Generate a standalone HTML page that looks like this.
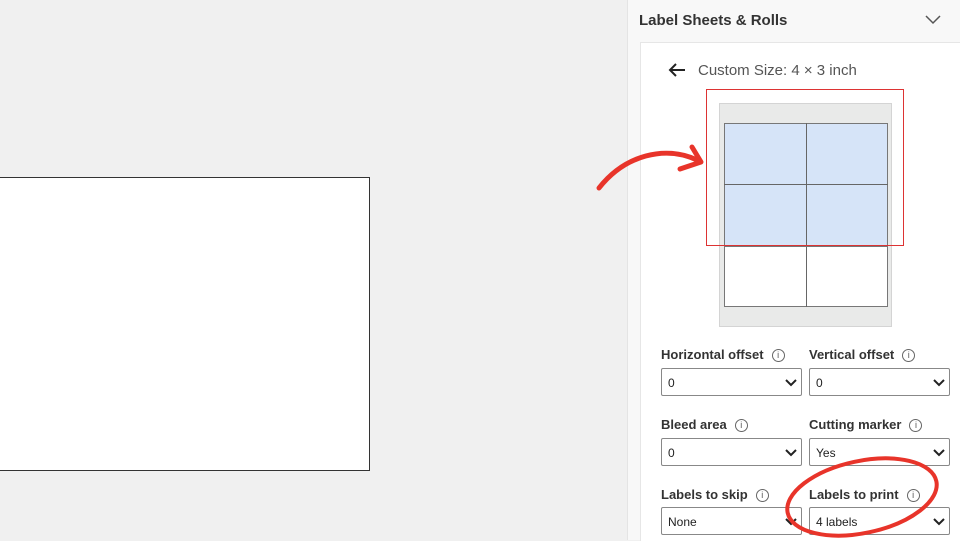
<!DOCTYPE html>
<html><head><style>
body{margin:0;width:960px;height:540px;overflow:hidden;background:#f0f0f0;font-family:"Liberation Sans",sans-serif;position:relative}
.a{position:absolute}
.lbl{position:absolute;font-weight:bold;font-size:13px;color:#333}
.lbl i{display:inline-block;width:11px;height:11px;border:1px solid #666;border-radius:50%;font-style:normal;font-weight:normal;font-size:9px;text-align:center;line-height:11px;margin-left:8px;vertical-align:1px;color:#555}
.sel{position:absolute;height:28px;border:1px solid #888;border-radius:2px;background:#fff;font-size:12px;color:#222;line-height:28px;padding-left:6px;box-sizing:border-box;width:141px}
.sel svg{position:absolute;right:4px;top:10px}
</style></head><body>
<div class="a" style="left:-1px;top:177px;width:369px;height:292px;background:#fff;border:1px solid #333"></div>
<div class="a" style="left:627px;top:0;width:333px;height:540px;background:#f8f8f8;border-left:1px solid #e4e4e4"></div>
<div class="a" style="left:639px;top:12px;font-size:15px;font-weight:bold;color:#333">Label Sheets &amp; Rolls</div>
<svg class="a" style="left:924px;top:14px" width="18" height="12"><path d="M2 2 L9 9 L16 2" fill="none" stroke="#555" stroke-width="1.5"/></svg>
<div class="a" style="left:640px;top:42px;width:320px;height:498px;background:#fff;border-top:1px solid #e6e6e6;border-left:1px solid #e6e6e6"></div>
<svg class="a" style="left:667px;top:62px" width="20" height="16"><path d="M18 8 H3 M9 2 L3 8 L9 14" fill="none" stroke="#222" stroke-width="2"/></svg>
<div class="a" style="left:698px;top:62px;font-size:15px;color:#555">Custom Size: 4 × 3 inch</div>
<div class="a" style="left:719px;top:103px;width:173px;height:224px;background:#e9eae9;border:1px solid #d4d4d4;box-sizing:border-box"></div>
<div class="a" style="left:724px;top:123px;width:164px;height:184px;background:#fff;border:1px solid #777;box-sizing:border-box"></div>
<div class="a" style="left:725px;top:124px;width:162px;height:122px;background:#d6e4f8"></div>
<div class="a" style="left:806px;top:123px;width:1px;height:184px;background:#666"></div>
<div class="a" style="left:724px;top:184px;width:164px;height:1px;background:#666"></div>
<div class="a" style="left:724px;top:246px;width:164px;height:1px;background:#777"></div>
<div class="a" style="left:706px;top:89px;width:198px;height:157px;border:1px solid #d33;box-sizing:border-box"></div>
<div class="lbl" style="left:661px;top:347px">Horizontal offset<i>i</i></div>
<div class="lbl" style="left:809px;top:347px">Vertical offset<i>i</i></div>
<div class="lbl" style="left:661px;top:417px">Bleed area<i>i</i></div>
<div class="lbl" style="left:809px;top:417px">Cutting marker<i>i</i></div>
<div class="lbl" style="left:661px;top:487px">Labels to skip<i>i</i></div>
<div class="lbl" style="left:809px;top:487px">Labels to print<i>i</i></div>
<div class="sel" style="left:661px;top:368px">0<svg width="12" height="8"><path d="M1 1 L6 6 L11 1" fill="none" stroke="#222" stroke-width="2"/></svg></div>
<div class="sel" style="left:809px;top:368px">0<svg width="12" height="8"><path d="M1 1 L6 6 L11 1" fill="none" stroke="#222" stroke-width="2"/></svg></div>
<div class="sel" style="left:661px;top:438px">0<svg width="12" height="8"><path d="M1 1 L6 6 L11 1" fill="none" stroke="#222" stroke-width="2"/></svg></div>
<div class="sel" style="left:809px;top:438px">Yes<svg width="12" height="8"><path d="M1 1 L6 6 L11 1" fill="none" stroke="#222" stroke-width="2"/></svg></div>
<div class="sel" style="left:661px;top:507px">None<svg width="12" height="8"><path d="M1 1 L6 6 L11 1" fill="none" stroke="#222" stroke-width="2"/></svg></div>
<div class="sel" style="left:809px;top:507px">4 labels<svg width="12" height="8"><path d="M1 1 L6 6 L11 1" fill="none" stroke="#222" stroke-width="2"/></svg></div>
<svg class="a" style="left:0;top:0" width="960" height="540">
<path d="M599 188 C 625 155, 665 145, 697 160" fill="none" stroke="#e8342a" stroke-width="5" stroke-linecap="round"/>
<path d="M692 147 L701 162 L680 169" fill="none" stroke="#e8342a" stroke-width="5" stroke-linecap="round" stroke-linejoin="round"/>
<ellipse cx="862" cy="497" rx="76" ry="36" transform="rotate(-12 862 497)" fill="none" stroke="#e8342a" stroke-width="4"/>
</svg>
</body></html>
